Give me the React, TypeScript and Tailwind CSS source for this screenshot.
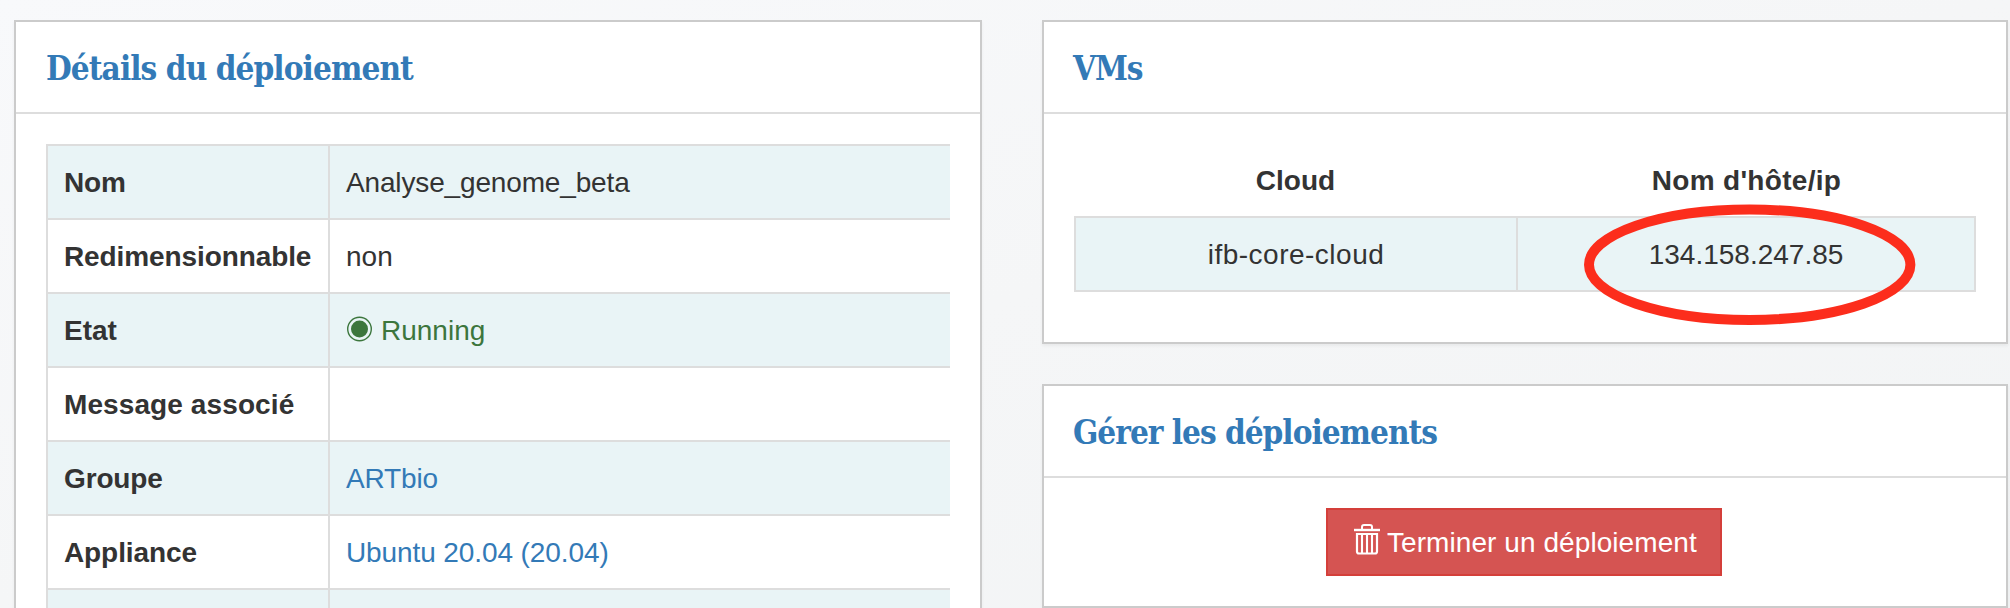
import type { ReactNode } from "react";

function Panel({ title, titleClass, className, children }: { title: string; titleClass: string; className: string; children: ReactNode }) {
  return (
    <section className={`border-2 border-[#cbcbcb] bg-white shadow-[0_2px_3px_rgba(0,0,0,0.05)] ${className}`}>
      <header className="flex h-[92px] items-center border-b-2 border-[#dddddd] pt-[3px]">
        <h3 className={`whitespace-nowrap font-['DejaVu_Serif_Condensed','DejaVu_Serif',serif] text-[33px] leading-[40px] font-bold text-[#337ab7] ${titleClass}`}>
          {title}
        </h3>
      </header>
      {children}
    </section>
  );
}

function StatusDot() {
  return (
    <svg viewBox="0 0 26 26" className="-mt-[5px] mr-[9px] h-[26px] w-[26px] shrink-0">
      <circle cx="13.5" cy="13" r="11.8" fill="none" stroke="#3c763d" strokeWidth="1.4" />
      <circle cx="13.5" cy="13" r="8.5" fill="#3c763d" />
    </svg>
  );
}

function TrashIcon() {
  return (
    <svg viewBox="0 0 26 31" className="h-[31px] w-[26px] shrink-0" fill="none" stroke="#fff">
      <path d="M8 5V3a2 2 0 0 1 2-2h6a2 2 0 0 1 2 2v2" strokeWidth="2" />
      <path d="M0 6h26" strokeWidth="2.4" />
      <path d="M3 10h20v17.5a2 2 0 0 1-2 2H5a2 2 0 0 1-2-2Z" strokeWidth="2.2" />
      <path d="M8 10v19M13 10v19M18 10v19" strokeWidth="2.1" />
    </svg>
  );
}

const rows: { label: string; labelClass?: string; value: ReactNode; tone: string }[] = [
  { label: "Nom", value: "Analyse_genome_beta", tone: "bg-[#e9f4f6] text-[#333] tracking-[-0.15px]" },
  { label: "Redimensionnable", labelClass: "tracking-[-0.1px]", value: "non", tone: "bg-white text-[#333]" },
  { label: "Etat", value: <><StatusDot />Running</>, tone: "bg-[#e9f4f6] text-[#3c763d]" },
  { label: "Message associé", labelClass: "tracking-[0.1px]", value: "", tone: "bg-white text-[#333]" },
  { label: "Groupe", value: "ARTbio", tone: "bg-[#e9f4f6] text-[#337ab7] tracking-[-0.15px]" },
  { label: "Appliance", value: "Ubuntu 20.04 (20.04)", tone: "bg-white text-[#337ab7] tracking-[-0.1px]" },
  { label: "", value: "", tone: "bg-[#e9f4f6] text-[#333]" },
];

export default function App() {
  return (
    <main className="flex h-[608px] w-[2010px] items-start gap-[60px] overflow-hidden bg-linear-to-br from-[#f8f9fb] via-[#f5f6f7] to-[#f2f4f5] pt-5 pl-[14px] font-['Liberation_Sans',Arial,sans-serif] text-[28px] leading-[40px] text-[#333]">
      <Panel title="Détails du déploiement" titleClass="pl-[30px] tracking-[-0.92px]" className="h-[640px] w-[968px] shrink-0">
        <div className="mt-[30px] ml-[30px] w-[904px] border-t-2 border-l-2 border-[#dddddd]">
          {rows.map((row, i) => (
            <div key={i} className={`flex h-[74px] border-b-2 border-[#dddddd] ${row.tone}`}>
              <div className={`flex w-[282px] shrink-0 items-center border-r-2 border-[#dddddd] pt-[2px] pl-4 font-bold text-[#333] ${row.labelClass ?? ""}`}>{row.label}</div>
              <div className="flex items-center pt-[2px] pl-[16px]">{row.value}</div>
            </div>
          ))}
        </div>
      </Panel>

      <div className="flex w-[966px] shrink-0 flex-col gap-10">
        <Panel title="VMs" titleClass="pl-[29px] tracking-[-1.1px]" className="h-[324px]">
          <div className="relative mt-[30px] ml-[30px] w-[902px] text-center">
            <div className="flex h-[72px] items-center pt-[2px] font-bold">
              <div className="w-[443px]">Cloud</div>
              <div className="w-[459px] tracking-[0.3px]">Nom d'hôte/ip</div>
            </div>
            <div className="flex h-[76px] border-2 border-[#dddddd] bg-[#e9f4f6]">
              <div className="flex w-[442px] items-center justify-center border-r-2 border-[#dddddd] pt-[2px] tracking-[0.5px]">ifb-core-cloud</div>
              <div className="flex flex-1 items-center justify-center pt-[2px]">134.158.247.85</div>
            </div>
            <svg viewBox="0 0 332 122" className="absolute top-[60px] left-[510px] h-[122px] w-[332px]">
              <ellipse cx="165.7" cy="60.7" rx="160.7" ry="55.2" fill="none" stroke="#fc2d1c" strokeWidth="10" />
            </svg>
          </div>
        </Panel>

        <Panel title="Gérer les déploiements" titleClass="pl-[29px] tracking-[-1px]" className="h-[224px]">
          <div className="flex justify-center pt-[30px]">
            <button className="-ml-[2px] flex h-[68px] w-[396px] items-center border-2 border-[#d43f3a] bg-[#d55452] pl-[26px] text-white">
              <span className="-mt-[5px] mr-[7px]"><TrashIcon /></span>
              <span className="whitespace-nowrap pt-[2px] tracking-[0.07px]">Terminer un déploiement</span>
            </button>
          </div>
        </Panel>
      </div>
    </main>
  );
}
